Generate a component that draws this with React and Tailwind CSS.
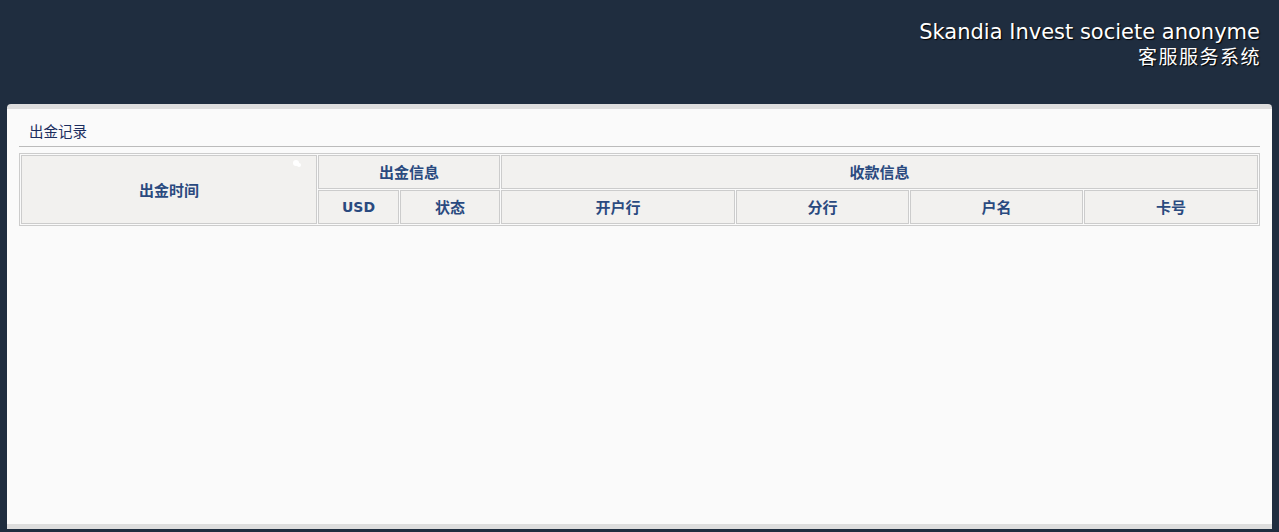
export default function App() {
  const cell = 'border border-[#cccccc] bg-[#f2f1ef] font-bold text-[#2a4a7f] text-center p-0 pt-[1px]';
  const th = `${cell} text-[15px]`;

  return (
    <div className="h-[532px] bg-[#1f2d3f] flex flex-col font-['DejaVu_Sans','Noto_Sans_CJK_SC',sans-serif] overflow-hidden">
      {/* top banner */}
      <div className="h-[104px] shrink-0 flex flex-col items-end pr-[19px] pt-[18px] text-white [text-shadow:1px_1px_1px_#000]">
        <div className="text-[21px] leading-[28px]">Skandia Invest societe anonyme</div>
        <div className="text-[19px] leading-[20px] font-['Noto_Sans_CJK_SC',sans-serif] tracking-[1.5px] mr-[-1px]">客服服务系统</div>
      </div>

      {/* main panel */}
      <div className="flex-1 mx-[7px] mb-[3px] rounded-t-[4px] border-t-[5px] border-b-[5px] border-[#dddddd] bg-[#fafafa] px-[12px]">
        <div className="h-[38px] border-b border-[#bbbbbb] pl-[10px] pt-[12px] text-[14.5px] leading-[20px] text-[#1b2d5e] font-['Noto_Sans_CJK_SC',sans-serif]">
          出金记录
        </div>

        <table className="mt-[6px] w-full border border-[#cccccc] border-separate border-spacing-[1px] font-['Noto_Sans_CJK_SC',sans-serif]">
          <thead>
            <tr className="h-[34px]">
              <th rowSpan={2} className={`${th} w-[296px] relative`}>
                出金时间
                <span className="absolute top-[4px] right-[17px] w-[6px] h-[6px] rounded-full bg-white" />
                <span className="absolute top-[7px] right-[15px] w-[4px] h-[4px] rounded-full bg-white" />
              </th>
              <th colSpan={2} className={th}>出金信息</th>
              <th colSpan={4} className={th}>收款信息</th>
            </tr>
            <tr className="h-[34px]">
              <th className={`${cell} w-[81px] text-[14px] font-['DejaVu_Sans',sans-serif]`}>USD</th>
              <th className={`${th} w-[100px]`}>状态</th>
              <th className={`${th} w-[234px]`}>开户行</th>
              <th className={`${th} w-[173px]`}>分行</th>
              <th className={`${th} w-[173px]`}>户名</th>
              <th className={th}>卡号</th>
            </tr>
          </thead>
        </table>
      </div>
    </div>
  );
}
